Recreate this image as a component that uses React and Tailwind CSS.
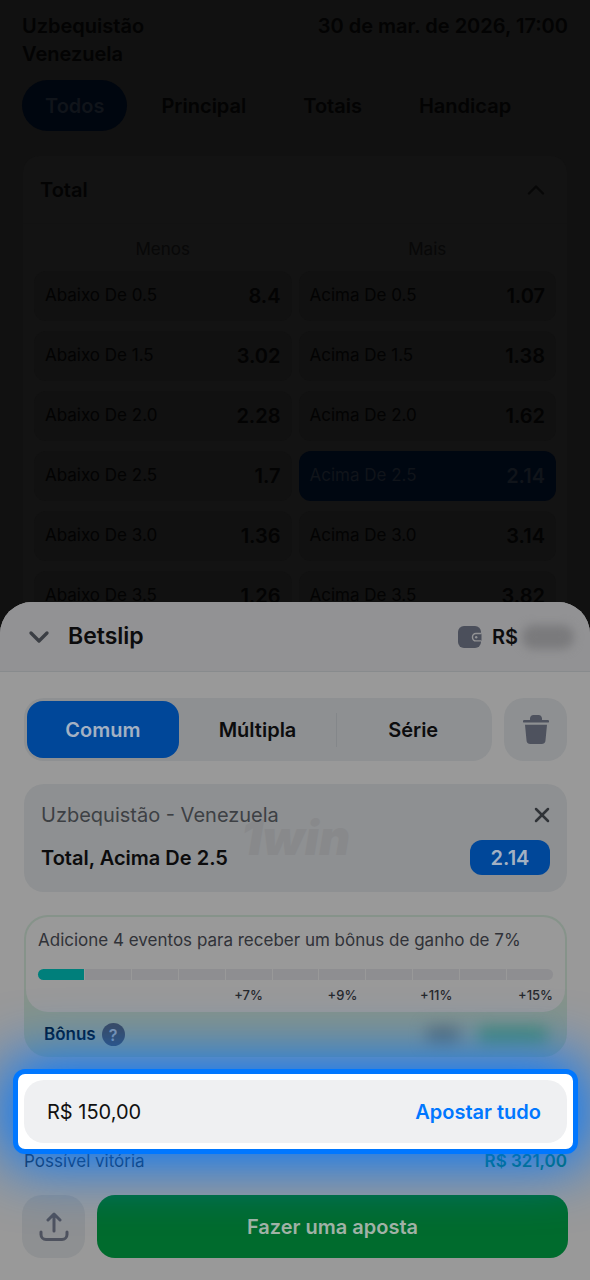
import { ChevronDown, ChevronUp, X } from 'lucide-react'

const MARKETS = ['Todos', 'Principal', 'Totais', 'Handicap']

const ODDS = [
  { line: '0.5', under: '8.4', over: '1.07' },
  { line: '1.5', under: '3.02', over: '1.38' },
  { line: '2.0', under: '2.28', over: '1.62' },
  { line: '2.5', under: '1.7', over: '2.14', picked: true },
  { line: '3.0', under: '1.36', over: '3.14' },
  { line: '3.5', under: '1.26', over: '3.82' },
]

const BONUS_STEPS = ['', '', '', '', '+7%', '', '+9%', '', '+11%', '', '+15%']

function WalletIcon() {
  return (
    <svg width="24" height="22" viewBox="0 0 24 22" aria-hidden="true">
      <rect width="23" height="22" rx="6" fill="#4b4f5b" />
      <path
        d="M23.500 7.500h-5.700a3.300 3.300 0 0 0-3.300 3.300v.8a3.300 3.300 0 0 0 3.300 3.300h5.700"
        fill="#4b4f5b"
        stroke="#929294"
        strokeWidth="1.4"
      />
      <circle cx="18.2" cy="11.2" r="1.2" fill="#929294" />
    </svg>
  )
}

function TrashIcon() {
  return (
    <svg width="26" height="29" viewBox="0 0 26 29" fill="#4e525e" aria-hidden="true">
      <path d="M7 5V3.600C7 1.500 8.400 0 10.500 0h5C17.600 0 19 1.500 19 3.600V5h5.800a1.300 1.300 0 0 1 0 2.600H1.200a1.300 1.300 0 0 1 0-2.600z" />
      <path d="M2 9.800h22l-1.500 15.400A4 4 0 0 1 18.500 29h-11a4 4 0 0 1-4-3.800z" />
    </svg>
  )
}

function ShareIcon() {
  return (
    <svg
      width="30"
      height="30"
      viewBox="0 0 30 30"
      fill="none"
      stroke="#4e525e"
      strokeWidth="3"
      strokeLinecap="round"
      strokeLinejoin="round"
      aria-hidden="true"
    >
      <path d="M15 19V3M9 8l6-6 6 6" />
      <path d="M2 20v2.500a5 5 0 0 0 5 5h16a5 5 0 0 0 5-5V20" />
    </svg>
  )
}

function OddButton({ label, value, picked }) {
  return (
    <button
      type="button"
      className={`flex h-[50px] items-center justify-between rounded-xl px-[11px] ${
        picked ? 'bg-[#000711] text-[#10141a]' : 'bg-[#111111] text-[#030303]'
      }`}
    >
      <span className="text-[17px]">{label}</span>
      <span className="text-xl font-semibold">{value}</span>
    </button>
  )
}

function MatchPage() {
  return (
    <main className="h-screen overflow-hidden bg-[#111111] px-[22px] pt-3 text-[#030303]">
      <header className="flex items-start justify-between text-xl leading-7 font-semibold">
        <h1>
          Uzbequistão
          <br />
          Venezuela
        </h1>
        <time dateTime="2026-03-30T17:00">30 de mar. de 2026, 17:00</time>
      </header>

      <nav className="mt-3 flex gap-[11px]">
        {MARKETS.map((market, i) => (
          <button
            key={market}
            type="button"
            className={`h-[51px] rounded-full px-[23px] text-xl font-semibold ${
              i === 0 ? 'bg-[#00060f] text-[#10141a]' : ''
            }`}
          >
            {market}
          </button>
        ))}
      </nav>

      <section className="mx-px mt-[25px] rounded-2xl bg-[#131313]">
        <button
          type="button"
          className="flex h-[68px] w-full items-center justify-between border-b border-[#121212] px-[17px] text-xl font-semibold"
        >
          Total
          <ChevronUp size={28} strokeWidth={2} color="#070707" aria-hidden />
        </button>
        <div className="grid grid-cols-2 gap-x-[7px] gap-y-[10px] px-[11px] pt-[13px]">
          <p className="text-center text-[17px] leading-6 text-[#080808]">Menos</p>
          <p className="text-center text-[17px] leading-6 text-[#080808]">Mais</p>
          {ODDS.map((odd) => (
            <div key={odd.line} className="contents">
              <OddButton label={`Abaixo De ${odd.line}`} value={odd.under} />
              <OddButton label={`Acima De ${odd.line}`} value={odd.over} picked={odd.picked} />
            </div>
          ))}
        </div>
      </section>
    </main>
  )
}

function BetTypeTabs() {
  return (
    <div className="flex gap-3">
      <div className="flex h-[63px] flex-1 items-center rounded-[20px] bg-[#8e9092] p-[3px] text-xl font-semibold">
        <button type="button" className="h-full flex-1 rounded-2xl bg-[#004799] text-[#a3b1c3]">
          Comum
        </button>
        <span className="w-[3px]" />
        <button type="button" className="h-full flex-1">
          Múltipla
        </button>
        <span className="ml-[3px] h-[34px] w-px bg-[#84878a]" />
        <button type="button" className="h-full flex-1">
          Série
        </button>
      </div>
      <button
        type="button"
        aria-label="Limpar"
        className="flex size-[63px] items-center justify-center rounded-[20px] bg-[#8e9092]"
      >
        <TrashIcon />
      </button>
    </div>
  )
}

function SelectionCard() {
  return (
    <article className="relative mt-[23px] flex h-[108px] flex-col justify-between rounded-[20px] bg-[#8e9092] px-[17px] py-[17px]">
      <span
        className="absolute inset-x-0 top-[30px] text-center text-5xl leading-[48px] font-black text-[#88898b] italic"
        aria-hidden="true"
      >
        1win
      </span>
      <div className="relative flex items-center justify-between text-xl leading-7 text-[#3d4044]">
        <h3>Uzbequistão - Venezuela</h3>
        <button type="button" aria-label="Remover" className="-mr-1">
          <X size={24} strokeWidth={2.5} color="#303337" />
        </button>
      </div>
      <div className="relative flex items-center justify-between text-xl font-semibold">
        <p>Total, Acima De 2.5</p>
        <span className="flex h-[35px] w-20 items-center justify-center rounded-xl bg-[#004799] text-[#a3b1c3]">
          2.14
        </span>
      </div>
    </article>
  )
}

function BonusCard() {
  return (
    <section className="mt-[23px] rounded-3xl bg-[#86938a] p-[2px]">
      <div className="rounded-[22px] bg-[#999999] px-3 pt-[9px] pb-[7px]">
        <p className="text-[17px] leading-7 text-[#303238]">
          Adicione 4 eventos para receber um bônus de ganho de 7%
        </p>
        <div className="mt-[15px] grid grid-cols-11 gap-x-px">
          {BONUS_STEPS.map((step, i) => (
            <span
              key={i}
              className={`h-[11px] first:rounded-l-full last:rounded-r-full ${
                i === 0 ? 'bg-[#007f7b]' : 'bg-[#8e8e91]'
              }`}
            />
          ))}
        </div>
        <div className="mt-[5px] grid grid-cols-11 gap-x-px text-[13px] leading-5 font-medium text-[#26282c]">
          {BONUS_STEPS.map((step, i) => (
            <span key={i} className="flex justify-center last:justify-end">
              {step}
            </span>
          ))}
        </div>
      </div>
      <div className="flex h-[43px] items-center justify-between px-[18px] pt-[2px]">
        <p className="flex items-center gap-[6px] text-[17px] font-semibold text-[#00142b]">
          Bônus
          <span className="flex size-[23px] items-center justify-center rounded-full bg-[#3f4655] text-base font-semibold text-[#8c96a6]">
            ?
          </span>
        </p>
        <div className="flex gap-5 blur-[8px]" aria-hidden="true">
          <span className="h-4 w-8 bg-[#5f6a68]" />
          <span className="h-4 w-[68px] bg-[#4a8866]" />
        </div>
      </div>
    </section>
  )
}

function StakeField() {
  return (
    <div className="relative z-10 -mx-[11px] mt-3 rounded-xl border-[5px] border-[#0077ff] bg-white p-[6px] shadow-[0_0_60px_10px_#0077ff]">
      <div className="flex h-[63px] items-center rounded-[20px] bg-[#eff0f2] pr-[26px] pl-[23px] text-xl">
        <input
          type="text"
          aria-label="Valor da aposta"
          defaultValue="R$ 150,00"
          className="min-w-0 flex-1 bg-transparent text-[#111111] outline-none"
        />
        <button type="button" className="font-semibold text-[#0077ff]">
          Apostar tudo
        </button>
      </div>
    </div>
  )
}

function Betslip() {
  return (
    <aside className="absolute inset-x-0 bottom-0 overflow-hidden rounded-t-[32px] bg-[#999999] text-[#0c0c0d]">
      <header className="flex h-[70px] items-center border-b border-[#888b8d] bg-[#929294] pr-4 pl-[23px]">
        <button type="button" aria-label="Fechar">
          <ChevronDown size={32} strokeWidth={2.5} color="#3b3e44" />
        </button>
        <h2 className="ml-[13px] flex-1 text-[23px] font-semibold">Betslip</h2>
        <WalletIcon />
        <span className="ml-[10px] text-xl font-semibold">R$</span>
        <span className="ml-1 h-6 w-[52px] rounded-full bg-[#7a7a7c] blur-[5px]" aria-hidden="true" />
      </header>

      <div className="pt-[26px] pr-[23px] pl-6">
        <BetTypeTabs />
        <SelectionCard />
        <BonusCard />
        <StakeField />
        <p className="flex items-center justify-between text-[17px] leading-[14px]">
          <span className="text-[#1d2024]">Possível vitória</span>
          <span className="font-semibold text-[#006a48]">R$ 321,00</span>
        </p>
      </div>

      <footer className="flex gap-3 px-[22px] pt-[27px] pb-[22px]">
        <button
          type="button"
          aria-label="Compartilhar"
          className="flex size-[63px] items-center justify-center rounded-[20px] bg-[#8e9092]"
        >
          <ShareIcon />
        </button>
        <button
          type="button"
          className="h-[63px] flex-1 rounded-[18px] bg-[#006b2d] text-xl font-semibold text-[#a2b3a6]"
        >
          Fazer uma aposta
        </button>
      </footer>
    </aside>
  )
}

export default function App() {
  return (
    <div className="relative h-screen overflow-hidden font-['Inter',sans-serif]">
      <MatchPage />
      <Betslip />
    </div>
  )
}
